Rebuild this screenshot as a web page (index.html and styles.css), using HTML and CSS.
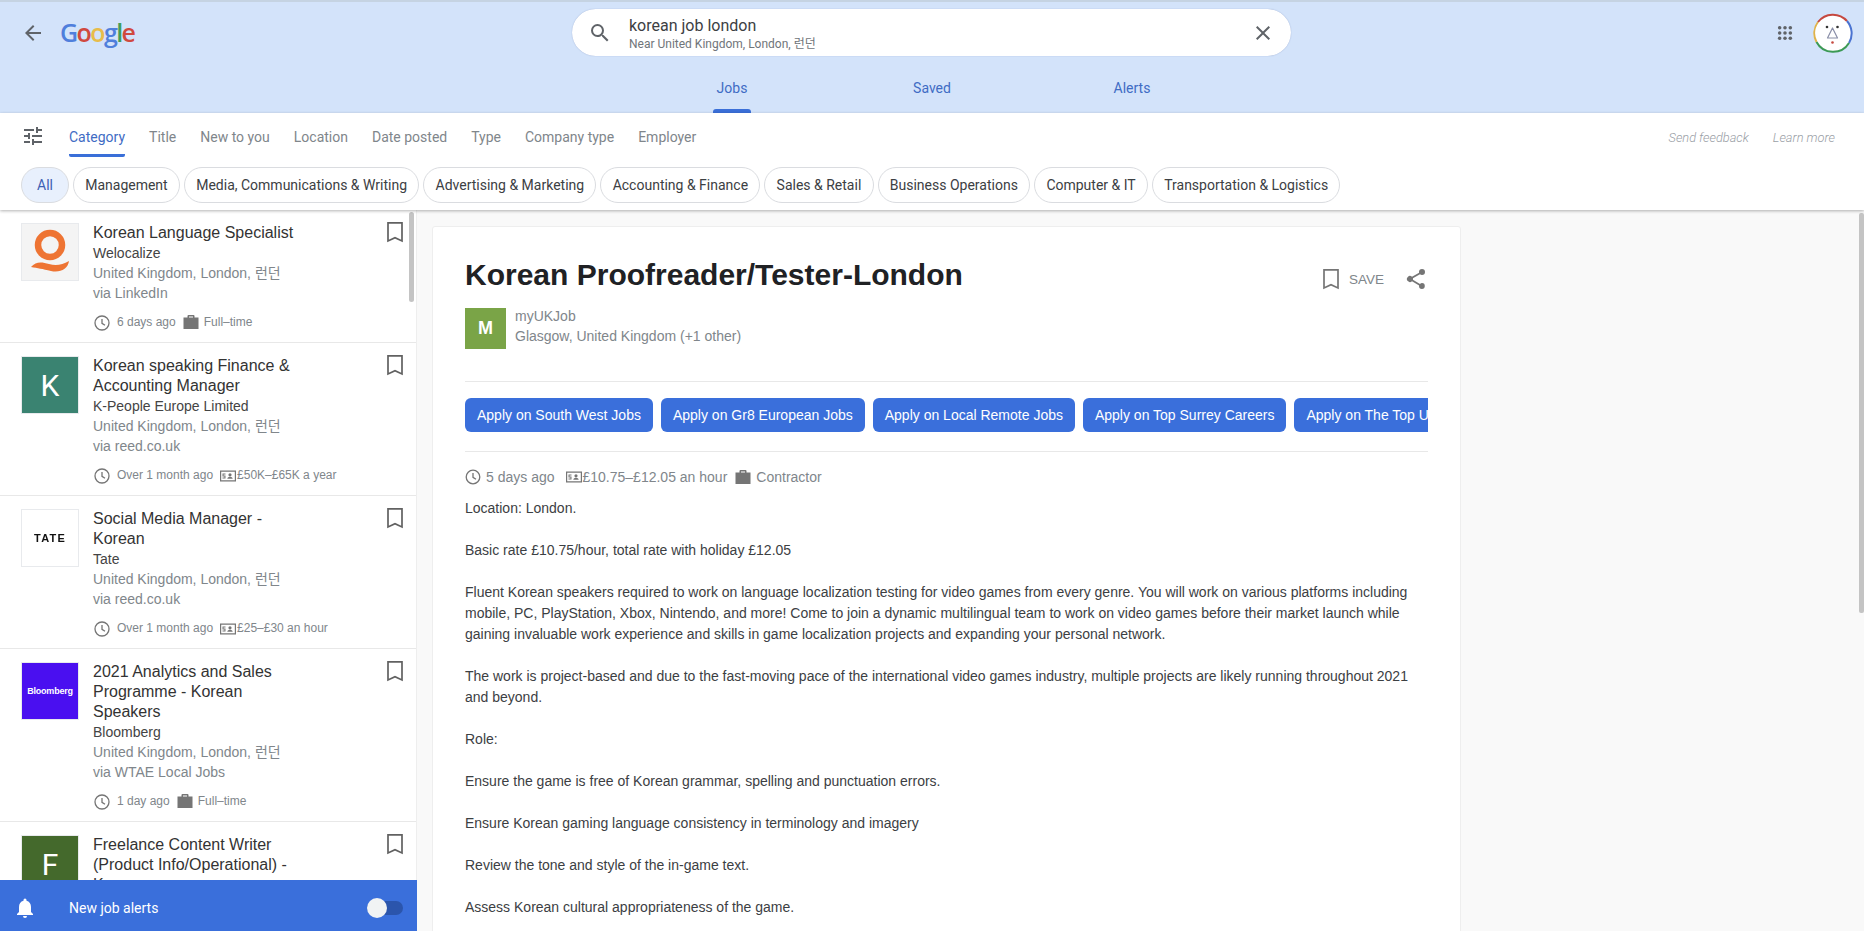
FILE: index.html
```html
<!DOCTYPE html>
<html lang="en">
<head>
  <meta charset="UTF-8" />
  <title>korean job london - Google Search</title>
  <link rel="stylesheet" href="styles.css">
</head>
<body>

<header class="topbar">
  <div class="top-row">
    <div class="brand">
      <svg class="back" width="24" height="24" viewBox="0 0 24 24"><path d="M20 11H7.800l5.600-5.600L12 4l-8 8 8 8 1.400-1.400L7.800 13H20z" fill="#5f6368"/></svg>
      <span class="logo"><span class="g-blue">G</span><span class="g-red">o</span><span class="g-yellow">o</span><span class="g-blue">g</span><span class="g-green">l</span><span class="g-red">e</span></span>
    </div>
    <div class="searchbox">
      <svg width="24" height="24" viewBox="0 0 24 24"><path d="M15.500 14h-.79l-.28-.27A6.470 6.470 0 0 0 16 9.500 6.500 6.500 0 1 0 9.500 16c1.610 0 3.090-.59 4.230-1.570l.27.28v.79l5 4.990L20.490 19l-4.990-5zm-6 0C7.010 14 5 11.990 5 9.500S7.010 5 9.500 5 14 7.010 14 9.500 11.990 14 9.500 14z" fill="#5f6368"/></svg>
      <div class="query">
        <div class="query-main">korean job london</div>
        <div class="query-sub">Near United Kingdom, London, 런던</div>
      </div>
      <svg width="24" height="24" viewBox="0 0 24 24"><path d="M19 6.400 17.600 5 12 10.600 6.400 5 5 6.400 10.600 12 5 17.600 6.400 19l5.600-5.600 5.600 5.600 1.400-1.400-5.600-5.600z" fill="#5f6368"/></svg>
    </div>
    <div class="account">
      <svg width="16" height="16" viewBox="0 0 18 18" fill="#5f6368">
        <circle cx="3" cy="3" r="2"/><circle cx="9" cy="3" r="2"/><circle cx="15" cy="3" r="2"/>
        <circle cx="3" cy="9" r="2"/><circle cx="9" cy="9" r="2"/><circle cx="15" cy="9" r="2"/>
        <circle cx="3" cy="15" r="2"/><circle cx="9" cy="15" r="2"/><circle cx="15" cy="15" r="2"/>
      </svg>
      <svg class="avatar" width="40" height="40" viewBox="0 0 40 40">
        <circle cx="20" cy="20" r="18.800" fill="#fff"/>
        <path d="M3.500 29A18.800 18.800 0 0 1 5 9" fill="none" stroke="#e0b34a" stroke-width="2"/>
        <path d="M5 9A18.800 18.800 0 0 1 34 8" fill="none" stroke="#c5483f" stroke-width="2"/>
        <path d="M34 8A18.800 18.800 0 0 1 36 30" fill="none" stroke="#4a73d1" stroke-width="2"/>
        <path d="M36 30A18.800 18.800 0 0 1 3.500 29" fill="none" stroke="#3c9a55" stroke-width="2"/>
        <path d="M19.500 15l-5 10h10z" fill="none" stroke="#8a8fa8" stroke-width="1.200" stroke-linejoin="round"/>
        <circle cx="14" cy="14" r="1.300" fill="#333"/><circle cx="24.500" cy="14" r="1.300" fill="#333"/>
        <circle cx="19.500" cy="29.500" r="1.300" fill="#c5483f"/>
      </svg>
    </div>
  </div>
  <nav class="tabs">
    <a class="tab active" href="#">Jobs</a>
    <a class="tab" href="#">Saved</a>
    <a class="tab" href="#">Alerts</a>
  </nav>
</header>

<section class="filters">
  <div class="filter-row">
    <svg class="tune" width="24" height="24" viewBox="0 0 24 24"><path d="M3 17v2h6v-2H3zM3 5v2h10V5H3zm10 16v-2h8v-2h-8v-2h-2v6h2zM7 9v2H3v2h4v2h2V9H7zm14 4v-2H11v2h10zm-6-4h2V7h4V5h-4V3h-2v6z" fill="#5f6368"/></svg>
    <a class="filter active" href="#">Category</a>
    <a class="filter" href="#">Title</a>
    <a class="filter" href="#">New to you</a>
    <a class="filter" href="#">Location</a>
    <a class="filter" href="#">Date posted</a>
    <a class="filter" href="#">Type</a>
    <a class="filter" href="#">Company type</a>
    <a class="filter" href="#">Employer</a>
    <div class="feedback">
      <a href="#">Send feedback</a>
      <a href="#">Learn more</a>
    </div>
  </div>
  <div class="chips">
    <a class="chip selected" href="#">All</a>
    <a class="chip" href="#">Management</a>
    <a class="chip" href="#">Media, Communications &amp; Writing</a>
    <a class="chip" href="#">Advertising &amp; Marketing</a>
    <a class="chip" href="#">Accounting &amp; Finance</a>
    <a class="chip" href="#">Sales &amp; Retail</a>
    <a class="chip" href="#">Business Operations</a>
    <a class="chip" href="#">Computer &amp; IT</a>
    <a class="chip" href="#">Transportation &amp; Logistics</a>
  </div>
</section>

<main class="content">
  <aside class="results">
    <div class="job-list">
      <div class="job">
        <div class="thumb light">
          <svg width="42" height="48" viewBox="0 0 42 48"><circle cx="21" cy="17" r="12" fill="none" stroke="#ee7433" stroke-width="6.500"/><path d="M2 39c5-6 11-5 18-3s13 1 20-3c-1 8-9 12-18 10s-13-3-20-4z" fill="#ee7433"/></svg>
        </div>
        <div class="job-text">
          <h3>Korean Language Specialist</h3>
          <div class="company">Welocalize</div>
          <div class="place">United Kingdom, London, 런던</div>
          <div class="place">via LinkedIn</div>
          <div class="meta">
            <svg class="ico" width="16" height="16" viewBox="0 0 16 16"><circle cx="8" cy="8" r="7" fill="none" stroke="#757575" stroke-width="1.300"/><path d="M8 4v4.300l3 2" fill="none" stroke="#757575" stroke-width="1.300"/></svg>
            <span>6 days ago</span>
            <svg class="ico gap" width="16" height="16" viewBox="0 0 16 16"><path d="M5.500 1h5a1 1 0 0 1 1 1v1.500h4V15H.5V3.500h4V2a1 1 0 0 1 1-1zM6 2.500v1h4v-1z" fill="#757575"/></svg>
            <span>Full–time</span>
          </div>
        </div>
        <svg class="mark" width="24" height="24" viewBox="0 0 24 24"><path d="M5 2.800h14V21l-7-3.200L5 21z" fill="none" stroke="#616161" stroke-width="1.700"/></svg>
      </div>

      <div class="job">
        <div class="thumb" style="background:#3a8371">K</div>
        <div class="job-text">
          <h3>Korean speaking Finance &amp; Accounting Manager</h3>
          <div class="company">K-People Europe Limited</div>
          <div class="place">United Kingdom, London, 런던</div>
          <div class="place">via reed.co.uk</div>
          <div class="meta">
            <svg class="ico" width="16" height="16" viewBox="0 0 16 16"><circle cx="8" cy="8" r="7" fill="none" stroke="#757575" stroke-width="1.300"/><path d="M8 4v4.300l3 2" fill="none" stroke="#757575" stroke-width="1.300"/></svg>
            <span>Over 1 month ago</span>
            <svg class="ico gap pay" width="16" height="16" viewBox="0 0 16 16"><path d="M0 2.500h16v11H0zm1.200 1.200v8.600h13.600V3.700zM2.500 5.500h3v1h-2v1h2v3h-3v-1h2v-1h-2zM10 5.200a1.600 1.600 0 1 1 0 3.200 1.600 1.600 0 0 1 0-3.200zM7.300 10.800c0-1.300 1.400-2 2.700-2s2.700.7 2.700 2z" fill="#757575"/></svg>
            <span>£50K–£65K a year</span>
          </div>
        </div>
        <svg class="mark" width="24" height="24" viewBox="0 0 24 24"><path d="M5 2.800h14V21l-7-3.200L5 21z" fill="none" stroke="#616161" stroke-width="1.700"/></svg>
      </div>

      <div class="job">
        <div class="thumb white"><span class="tate">TATE</span></div>
        <div class="job-text">
          <h3>Social Media Manager - Korean</h3>
          <div class="company">Tate</div>
          <div class="place">United Kingdom, London, 런던</div>
          <div class="place">via reed.co.uk</div>
          <div class="meta">
            <svg class="ico" width="16" height="16" viewBox="0 0 16 16"><circle cx="8" cy="8" r="7" fill="none" stroke="#757575" stroke-width="1.300"/><path d="M8 4v4.300l3 2" fill="none" stroke="#757575" stroke-width="1.300"/></svg>
            <span>Over 1 month ago</span>
            <svg class="ico gap pay" width="16" height="16" viewBox="0 0 16 16"><path d="M0 2.500h16v11H0zm1.200 1.200v8.600h13.600V3.700zM2.500 5.500h3v1h-2v1h2v3h-3v-1h2v-1h-2zM10 5.200a1.600 1.600 0 1 1 0 3.200 1.600 1.600 0 0 1 0-3.200zM7.300 10.800c0-1.300 1.400-2 2.700-2s2.700.7 2.700 2z" fill="#757575"/></svg>
            <span>£25–£30 an hour</span>
          </div>
        </div>
        <svg class="mark" width="24" height="24" viewBox="0 0 24 24"><path d="M5 2.800h14V21l-7-3.200L5 21z" fill="none" stroke="#616161" stroke-width="1.700"/></svg>
      </div>

      <div class="job">
        <div class="thumb bloom" style="background:#4a0ff0">Bloomberg</div>
        <div class="job-text">
          <h3>2021 Analytics and Sales Programme - Korean Speakers</h3>
          <div class="company">Bloomberg</div>
          <div class="place">United Kingdom, London, 런던</div>
          <div class="place">via WTAE Local Jobs</div>
          <div class="meta">
            <svg class="ico" width="16" height="16" viewBox="0 0 16 16"><circle cx="8" cy="8" r="7" fill="none" stroke="#757575" stroke-width="1.300"/><path d="M8 4v4.300l3 2" fill="none" stroke="#757575" stroke-width="1.300"/></svg>
            <span>1 day ago</span>
            <svg class="ico gap" width="16" height="16" viewBox="0 0 16 16"><path d="M5.500 1h5a1 1 0 0 1 1 1v1.500h4V15H.5V3.500h4V2a1 1 0 0 1 1-1zM6 2.500v1h4v-1z" fill="#757575"/></svg>
            <span>Full–time</span>
          </div>
        </div>
        <svg class="mark" width="24" height="24" viewBox="0 0 24 24"><path d="M5 2.800h14V21l-7-3.200L5 21z" fill="none" stroke="#616161" stroke-width="1.700"/></svg>
      </div>

      <div class="job">
        <div class="thumb" style="background:#44692c">F</div>
        <div class="job-text">
          <h3>Freelance Content Writer (Product Info/Operational) - Korean</h3>
        </div>
        <svg class="mark" width="24" height="24" viewBox="0 0 24 24"><path d="M5 2.800h14V21l-7-3.200L5 21z" fill="none" stroke="#616161" stroke-width="1.700"/></svg>
      </div>

      <div class="list-scroll"></div>
    </div>
    <div class="alerts-bar">
      <svg width="24" height="24" viewBox="0 0 24 24"><path d="M12 22a2 2 0 0 0 2-2h-4a2 2 0 0 0 2 2zm6-6v-5c0-3.100-1.600-5.600-4.500-6.300V4a1.500 1.500 0 0 0-3 0v.7C7.600 5.400 6 7.900 6 11v5l-2 2v1h16v-1z" fill="#fff"/></svg>
      <span>New job alerts</span>
      <div class="toggle"><div class="knob"></div></div>
    </div>
  </aside>

  <div class="detail">
    <article class="card">
      <div class="card-head">
        <h1>Korean Proofreader/Tester-London</h1>
        <div class="actions">
          <svg width="24" height="24" viewBox="0 0 24 24"><path d="M5 2.800h14V21l-7-3.200L5 21z" fill="none" stroke="#757575" stroke-width="1.700"/></svg>
          <span class="save">SAVE</span>
          <svg class="share" width="24" height="24" viewBox="0 0 24 24"><path d="M18 16.100c-.8 0-1.400.3-2 .8l-7.100-4.200c.1-.2.100-.5.100-.7s0-.5-.1-.7L16 7.200c.5.500 1.200.8 2 .8a3 3 0 1 0-3-3c0 .2 0 .5.100.7L8 9.800A3 3 0 1 0 8 14.200l7.100 4.200c-.1.200-.1.400-.1.600a2.900 2.900 0 1 0 3-2.900z" fill="#757575"/></svg>
        </div>
      </div>
      <div class="source">
        <div class="source-thumb">M</div>
        <div class="source-text">
          <div>myUKJob</div>
          <div>Glasgow, United Kingdom (+1 other)</div>
        </div>
      </div>
      <div class="apply-row">
        <a class="apply" href="#">Apply on South West Jobs</a>
        <a class="apply" href="#">Apply on Gr8 European Jobs</a>
        <a class="apply" href="#">Apply on Local Remote Jobs</a>
        <a class="apply" href="#">Apply on Top Surrey Careers</a>
        <a class="apply" href="#">Apply on The Top UK Jobs</a>
      </div>
      <div class="card-meta">
        <svg width="16" height="16" viewBox="0 0 16 16"><circle cx="8" cy="8" r="6.800" fill="none" stroke="#757575" stroke-width="1.300"/><path d="M8 4v4.300l3 2" fill="none" stroke="#757575" stroke-width="1.300"/></svg>
        <span>5 days ago</span>
        <svg class="m-gap" width="16" height="16" viewBox="0 0 16 16"><path d="M0 2.500h16v11H0zm1.200 1.200v8.600h13.600V3.700zM2.500 5.500h3v1h-2v1h2v3h-3v-1h2v-1h-2zM10 5.200a1.600 1.600 0 1 1 0 3.200 1.600 1.600 0 0 1 0-3.200zM7.300 10.800c0-1.300 1.400-2 2.700-2s2.700.7 2.700 2z" fill="#757575"/></svg>
        <span class="tight">£10.75–£12.05 an hour</span>
        <svg class="m-gap2" width="16" height="16" viewBox="0 0 16 16"><path d="M5.500 1h5a1 1 0 0 1 1 1v1.500h4V15H.5V3.500h4V2a1 1 0 0 1 1-1zM6 2.500v1h4v-1z" fill="#757575"/></svg>
        <span>Contractor</span>
      </div>
      <div class="description">
        <p>Location: London.</p>
        <p>Basic rate £10.75/hour, total rate with holiday £12.05</p>
        <p>Fluent Korean speakers required to work on language localization testing for video games from every genre. You will work on various platforms including mobile, PC, PlayStation, Xbox, Nintendo, and more! Come to join a dynamic multilingual team to work on video games before their market launch while gaining invaluable work experience and skills in game localization projects and expanding your personal network.</p>
        <p>The work is project-based and due to the fast-moving pace of the international video games industry, multiple projects are likely running throughout 2021 and beyond.</p>
        <p>Role:</p>
        <p>Ensure the game is free of Korean grammar, spelling and punctuation errors.</p>
        <p>Ensure Korean gaming language consistency in terminology and imagery</p>
        <p>Review the tone and style of the in-game text.</p>
        <p>Assess Korean cultural appropriateness of the game.</p>
      </div>
    </article>
    <div class="page-scroll"></div>
  </div>
</main>

</body>
</html>
```

FILE: styles.css
```css
* {
  box-sizing: border-box;
}
html, body {
  height: 100%;
}
body {
  margin: 0;
  overflow: hidden;
  display: flex;
  flex-direction: column;
  font-family: "Liberation Sans", Arial, sans-serif;
  font-size: 14px;
  color: #222;
  background: #fff;
}
a {
  text-decoration: none;
}
svg {
  display: block;
  flex-shrink: 0;
}

/* top bar */
.topbar {
  height: 113px;
  flex-shrink: 0;
  background: #d3e3fa;
  border-top: 2px solid #c5d3e2;
}
.top-row {
  display: flex;
  align-items: center;
  height: 47px;
  margin-top: 7px;
  padding: 0 11px 0 21px;
}
.brand {
  width: 551px;
  display: flex;
  align-items: center;
  gap: 15px;
}
.logo {
  font-family: "Open Sans", sans-serif;
  font-size: 25px;
  font-weight: 600;
  letter-spacing: -1.6px;
  line-height: 1;
}
.g-blue { color: #4f7fdc; }
.g-red { color: #d0493f; }
.g-yellow { color: #e8bc4a; }
.g-green { color: #3f9d5a; }
.searchbox {
  width: 719px;
  height: 47px;
  display: flex;
  align-items: center;
  padding: 0 16px;
  background: #fff;
  border-radius: 24px;
  box-shadow: 0 0 1px rgba(60, 90, 160, 0.5);
}
.query {
  flex: 1;
  margin-left: 17px;
  padding-top: 2px;
}
.query-main {
  font-size: 16px;
  line-height: 20px;
  color: #3c4043;
  font-family: Roboto, sans-serif;
}
.query-sub {
  font-size: 12px;
  line-height: 16px;
  color: #70757a;
  font-family: Roboto, "Noto Sans CJK KR", sans-serif;
}
.account {
  margin-left: auto;
  display: flex;
  align-items: center;
  gap: 20px;
}
.tabs {
  display: flex;
  justify-content: center;
  height: 57px;
}
.tab {
  width: 200px;
  text-align: center;
  position: relative;
  font-family: Roboto, sans-serif;
  font-size: 14px;
  color: #3f6cc4;
  padding-top: 24px;
}
.tab.active::after {
  content: "";
  position: absolute;
  left: 81px;
  bottom: 0;
  width: 38px;
  height: 4px;
  border-radius: 3px 3px 0 0;
  background: #3a6fd8;
}

/* filters */
.filters {
  height: 97px;
  flex-shrink: 0;
  background: #fff;
  box-shadow: 0 1px 3px rgba(0, 0, 0, 0.3);
  position: relative;
  z-index: 1;
}
.filter-row {
  display: flex;
  align-items: stretch;
  height: 44px;
  padding-left: 21px;
}
.tune {
  margin: 11px 24px 0 0;
}
.filter {
  font-family: Roboto, sans-serif;
  font-size: 14px;
  line-height: 48px;
  color: #80868b;
  margin-right: 24px;
  height: 44px;
}
.filter.active {
  color: #3f6cc4;
  border-bottom: 3px solid #3a6fd8;
  border-radius: 0 0 2px 2px;
}
.feedback {
  margin-left: auto;
  display: flex;
  gap: 24px;
  padding: 17px 29px 0 0;
  font-family: Roboto, sans-serif;
  font-size: 12.800px;
  font-style: italic;
  font-weight: 300;
}
.feedback a {
  color: #9aa0a6;
}
.chips {
  display: flex;
  gap: 4px;
  padding: 10px 0 0 21px;
}
.chip {
  height: 36px;
  padding: 0 11.250px;
  display: flex;
  align-items: center;
  border: 1px solid #dadce0;
  border-radius: 18px;
  font-family: Roboto, sans-serif;
  font-size: 14px;
  color: #3c4043;
  white-space: nowrap;
}
.chip.selected {
  background: #e8f0fd;
  color: #3f5fb4;
  padding: 0 15px;
}

/* left list */
.content {
  flex: 1;
  min-height: 0;
  display: flex;
}
.results {
  width: 417px;
  flex-shrink: 0;
  display: flex;
  flex-direction: column;
  background: #fff;
}
.job-list {
  flex: 1;
  min-height: 0;
  position: relative;
  overflow: hidden;
  border-right: 1px solid #eee;
}
.job {
  display: flex;
  padding: 13px 0 10px 21px;
  border-bottom: 1px solid #e8e8e8;
}
.thumb {
  width: 58px;
  height: 58px;
  flex-shrink: 0;
  display: flex;
  align-items: center;
  justify-content: center;
  font-family: Roboto, sans-serif;
  font-size: 30px;
  color: #fff;
  border: 1px solid #e8eaed;
}
.thumb.light {
  background: #f4f4f4;
}
.thumb.white {
  background: #fff;
}
.tate {
  color: #111;
  font-family: "Liberation Sans", sans-serif;
  font-weight: bold;
  font-size: 11px;
  letter-spacing: 1.200px;
  filter: blur(0.6px);
}
.thumb.bloom {
  font-family: "Liberation Sans", sans-serif;
  font-size: 9px;
  font-weight: bold;
  letter-spacing: -0.2px;
}
.job-text {
  width: 205px;
  margin-left: 14px;
}
.job-text h3 {
  margin: 0;
  font-size: 16px;
  line-height: 20px;
  font-weight: normal;
  color: #333;
}
.company {
  line-height: 20px;
  color: #444;
}
.place {
  line-height: 20px;
  color: #80868b;
  font-family: "Liberation Sans", "Noto Sans CJK KR", sans-serif;
  white-space: nowrap;
}
.meta {
  display: flex;
  align-items: center;
  margin-top: 9px;
  height: 20px;
  font-size: 12px;
  color: #80868b;
  white-space: nowrap;
}
.ico {
  margin: 1px 7px 0 1px;
}
.ico.gap {
  margin: 0 5px 0 7px;
}
.ico.pay {
  margin: 1px 1px 0 7px;
}
.mark {
  position: absolute;
  left: 383px;
  margin-top: -3px;
}
.list-scroll {
  position: absolute;
  top: 2px;
  left: 409px;
  width: 5px;
  height: 90px;
  background: #c4c4c4;
  border-radius: 3px;
}
.alerts-bar {
  flex-shrink: 0;
  height: 51px;
  display: flex;
  align-items: center;
  padding: 4px 14px 0 13px;
  background: #3a6fdb;
  color: #fff;
  font-family: Roboto, sans-serif;
  font-size: 14px;
}
.alerts-bar span {
  margin-left: 32px;
}
.toggle {
  margin-left: auto;
  width: 36px;
  height: 14px;
  border-radius: 7px;
  background: #2b55ac;
  position: relative;
}
.knob {
  position: absolute;
  left: 0;
  top: -3px;
  width: 20px;
  height: 20px;
  border-radius: 50%;
  background: #f1f3f4;
}

/* detail */
.detail {
  flex: 1;
  min-width: 0;
  position: relative;
  background: #f9f9f9;
  padding: 16px 0 0 15px;
  overflow: hidden;
}
.card {
  width: 1029px;
  background: #fff;
  border: 1px solid #eee;
  border-radius: 3px;
  padding: 30px 32px 0;
}
.card-head {
  display: flex;
  justify-content: space-between;
  height: 39px;
}
.card h1 {
  margin: 0;
  font-size: 30px;
  line-height: 36px;
  font-weight: bold;
  color: #202124;
}
.actions {
  display: flex;
  align-items: center;
  height: 36px;
  margin-top: 4px;
}
.save {
  margin-left: 6px;
  font-size: 13.500px;
  color: #80868b;
}
.share {
  margin-left: 20px;
}
.source {
  display: flex;
  margin-top: 12px;
  padding-bottom: 32px;
  border-bottom: 1px solid #e8e8e8;
}
.source-thumb {
  width: 41px;
  height: 41px;
  background: #7aa447;
  color: #fff;
  font-size: 18px;
  font-weight: bold;
  display: flex;
  align-items: center;
  justify-content: center;
}
.source-text {
  margin: -2px 0 0 9px;
  color: #80868b;
  line-height: 20px;
}
.apply-row {
  display: flex;
  gap: 8px;
  overflow: hidden;
  padding: 16px 0 19px;
  border-bottom: 1px solid #e8e8e8;
}
.apply {
  flex-shrink: 0;
  height: 34px;
  display: flex;
  align-items: center;
  padding: 0 12px;
  border-radius: 6px;
  background: #3a6fdb;
  color: #fff;
  font-size: 14px;
  white-space: nowrap;
}
.card-meta {
  display: flex;
  align-items: center;
  margin-top: 15px;
  height: 20px;
  color: #80868b;
}
.card-meta svg {
  margin-right: 5px;
}
.card-meta .m-gap {
  margin-left: 11px;
}
.card-meta .m-gap2 {
  margin-left: 8px;
}
.card-meta .tight {
  margin-left: -4px;
}
.description {
  margin-top: 11px;
  color: #3c4043;
  line-height: 21px;
}
.description p {
  margin: 0 0 21px;
}
.page-scroll {
  position: absolute;
  right: 0;
  top: 3px;
  width: 5px;
  height: 400px;
  background: #c4c4c4;
  border-radius: 2px;
}
```
